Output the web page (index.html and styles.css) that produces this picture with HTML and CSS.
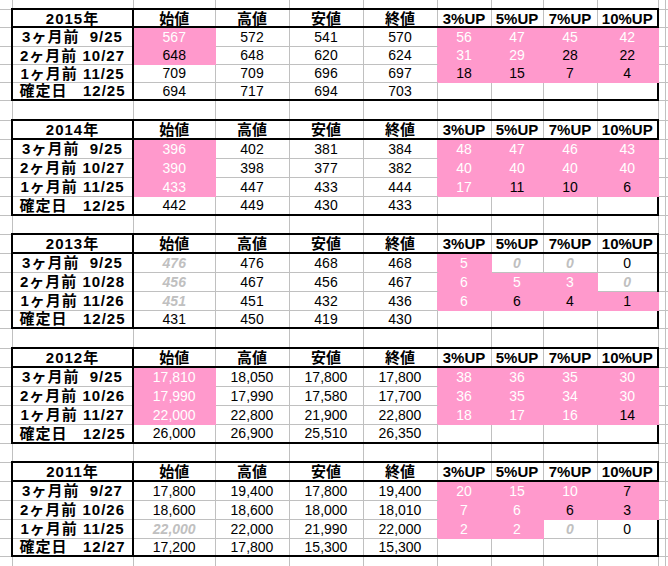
FILE: index.html
```html
<!DOCTYPE html>
<html lang="ja">
<head>
<meta charset="utf-8">
<title>株価 3ヶ月前比較</title>
<link rel="stylesheet" href="styles.css">
</head>
<body>
<table class="sheet">
<colgroup>
<col class="k0"><col class="k1"><col class="k2"><col class="k3"><col class="k3"><col class="k3"><col class="k6"><col class="k7"><col class="k6"><col class="k9"><col class="k10"><col class="k11">
</colgroup>
<tbody>
<tr class="h9 top"><td class="e"></td><td></td><td></td><td></td><td></td><td></td><td></td><td></td><td></td><td></td><td class="e"></td><td class="e"></td></tr>
</tbody>

<tbody class="blk">
<tr class="hd h18"><td class="e"></td><td class="lb">2015年</td><td>始値</td><td>高値</td><td>安値</td><td>終値</td><td>3%UP</td><td>5%UP</td><td>7%UP</td><td class="u4">10%UP</td><td class="e"></td><td class="e"></td></tr>
<tr class="h19"><td class="e"></td><td class="lb">3ヶ月前&nbsp;&nbsp;9/25</td><td class="p w">567</td><td>572</td><td>541</td><td class="pr">570</td><td class="p w">56</td><td class="p w">47</td><td class="p w">45</td><td class="p w u4">42</td><td class="e"></td><td class="e"></td></tr>
<tr class="h18"><td class="e"></td><td class="lb">2ヶ月前 10/27</td><td class="p">648</td><td>648</td><td>620</td><td class="pr">624</td><td class="p w">31</td><td class="p w">29</td><td class="p">28</td><td class="p u4">22</td><td class="e"></td><td class="e"></td></tr>
<tr class="h18"><td class="e"></td><td class="lb">1ヶ月前 11/25</td><td>709</td><td>709</td><td>696</td><td class="pr">697</td><td class="p">18</td><td class="p">15</td><td class="p">7</td><td class="p u4">4</td><td class="e"></td><td class="e"></td></tr>
<tr class="h18"><td class="e"></td><td class="lb">確定日&nbsp;&nbsp;&nbsp;12/25</td><td>694</td><td>717</td><td>694</td><td>703</td><td></td><td></td><td></td><td class="u4"></td><td class="e"></td><td class="e"></td></tr>
</tbody>

<tbody>
<tr class="h20"><td class="e"></td><td></td><td></td><td></td><td></td><td></td><td></td><td></td><td></td><td></td><td class="e"></td><td class="e"></td></tr>
</tbody>

<tbody class="blk">
<tr class="hd h19"><td class="e"></td><td class="lb">2014年</td><td>始値</td><td>高値</td><td>安値</td><td>終値</td><td>3%UP</td><td>5%UP</td><td>7%UP</td><td class="u4">10%UP</td><td class="e"></td><td class="e"></td></tr>
<tr class="h19"><td class="e"></td><td class="lb">3ヶ月前&nbsp;&nbsp;9/25</td><td class="p w">396</td><td>402</td><td>381</td><td class="pr">384</td><td class="p w">48</td><td class="p w">47</td><td class="p w">46</td><td class="p w u4">43</td><td class="e"></td><td class="e"></td></tr>
<tr class="h19"><td class="e"></td><td class="lb">2ヶ月前 10/27</td><td class="p w">390</td><td>398</td><td>377</td><td class="pr">382</td><td class="p w">40</td><td class="p w">40</td><td class="p w">40</td><td class="p w u4">40</td><td class="e"></td><td class="e"></td></tr>
<tr class="h19"><td class="e"></td><td class="lb">1ヶ月前 11/25</td><td class="p w">433</td><td>447</td><td>433</td><td class="pr">444</td><td class="p w">17</td><td class="p">11</td><td class="p">10</td><td class="p u4">6</td><td class="e"></td><td class="e"></td></tr>
<tr class="h19"><td class="e"></td><td class="lb">確定日&nbsp;&nbsp;&nbsp;12/25</td><td>442</td><td>449</td><td>430</td><td>433</td><td></td><td></td><td></td><td class="u4"></td><td class="e"></td><td class="e"></td></tr>
</tbody>

<tbody>
<tr class="h19"><td class="e"></td><td></td><td></td><td></td><td></td><td></td><td></td><td></td><td></td><td></td><td class="e"></td><td class="e"></td></tr>
</tbody>

<tbody class="blk">
<tr class="hd h19"><td class="e"></td><td class="lb">2013年</td><td>始値</td><td>高値</td><td>安値</td><td>終値</td><td>3%UP</td><td>5%UP</td><td>7%UP</td><td class="u4">10%UP</td><td class="e"></td><td class="e"></td></tr>
<tr class="h19"><td class="e"></td><td class="lb">3ヶ月前&nbsp;&nbsp;9/25</td><td class="g">476</td><td>476</td><td>468</td><td class="pr">468</td><td class="p w">5</td><td class="g">0</td><td class="g">0</td><td class="u4">0</td><td class="e"></td><td class="e"></td></tr>
<tr class="h19"><td class="e"></td><td class="lb">2ヶ月前 10/28</td><td class="g">456</td><td>467</td><td>456</td><td class="pr">467</td><td class="p w">6</td><td class="p w">5</td><td class="p w">3</td><td class="g u4">0</td><td class="e"></td><td class="e"></td></tr>
<tr class="h19"><td class="e"></td><td class="lb">1ヶ月前 11/26</td><td class="g">451</td><td>451</td><td>432</td><td class="pr">436</td><td class="p w">6</td><td class="p">6</td><td class="p">4</td><td class="p u4">1</td><td class="e"></td><td class="e"></td></tr>
<tr class="h18"><td class="e"></td><td class="lb">確定日&nbsp;&nbsp;&nbsp;12/25</td><td>431</td><td>450</td><td>419</td><td>430</td><td></td><td></td><td></td><td class="u4"></td><td class="e"></td><td class="e"></td></tr>
</tbody>

<tbody>
<tr class="h20"><td class="e"></td><td></td><td></td><td></td><td></td><td></td><td></td><td></td><td></td><td></td><td class="e"></td><td class="e"></td></tr>
</tbody>

<tbody class="blk">
<tr class="hd h19"><td class="e"></td><td class="lb">2012年</td><td>始値</td><td>高値</td><td>安値</td><td>終値</td><td>3%UP</td><td>5%UP</td><td>7%UP</td><td class="u4">10%UP</td><td class="e"></td><td class="e"></td></tr>
<tr class="h19"><td class="e"></td><td class="lb">3ヶ月前&nbsp;&nbsp;9/25</td><td class="p w">17,810</td><td>18,050</td><td>17,800</td><td class="pr">17,800</td><td class="p w">38</td><td class="p w">36</td><td class="p w">35</td><td class="p w u4">30</td><td class="e"></td><td class="e"></td></tr>
<tr class="h19"><td class="e"></td><td class="lb">2ヶ月前 10/26</td><td class="p w">17,990</td><td>17,990</td><td>17,580</td><td class="pr">17,700</td><td class="p w">36</td><td class="p w">35</td><td class="p w">34</td><td class="p w u4">30</td><td class="e"></td><td class="e"></td></tr>
<tr class="h19"><td class="e"></td><td class="lb">1ヶ月前 11/27</td><td class="p w">22,000</td><td>22,800</td><td>21,900</td><td class="pr">22,800</td><td class="p w">18</td><td class="p w">17</td><td class="p w">16</td><td class="p u4">14</td><td class="e"></td><td class="e"></td></tr>
<tr class="h19"><td class="e"></td><td class="lb">確定日&nbsp;&nbsp;&nbsp;12/25</td><td>26,000</td><td>26,900</td><td>25,510</td><td>26,350</td><td></td><td></td><td></td><td class="u4"></td><td class="e"></td><td class="e"></td></tr>
</tbody>

<tbody>
<tr class="h19"><td class="e"></td><td></td><td></td><td></td><td></td><td></td><td></td><td></td><td></td><td></td><td class="e"></td><td class="e"></td></tr>
</tbody>

<tbody class="blk">
<tr class="hd h19"><td class="e"></td><td class="lb">2011年</td><td>始値</td><td>高値</td><td>安値</td><td>終値</td><td>3%UP</td><td>5%UP</td><td>7%UP</td><td class="u4">10%UP</td><td class="e"></td><td class="e"></td></tr>
<tr class="h19"><td class="e"></td><td class="lb">3ヶ月前&nbsp;&nbsp;9/27</td><td>17,800</td><td>19,400</td><td>17,800</td><td class="pr">19,400</td><td class="p w">20</td><td class="p w">15</td><td class="p w">10</td><td class="p u4">7</td><td class="e"></td><td class="e"></td></tr>
<tr class="h19"><td class="e"></td><td class="lb">2ヶ月前 10/26</td><td>18,600</td><td>18,600</td><td>18,000</td><td class="pr">18,010</td><td class="p w">7</td><td class="p w">6</td><td class="p">6</td><td class="p u4">3</td><td class="e"></td><td class="e"></td></tr>
<tr class="h19"><td class="e"></td><td class="lb">1ヶ月前 11/25</td><td class="g">22,000</td><td>22,000</td><td>21,990</td><td class="pr">22,000</td><td class="p w">2</td><td class="p w">2</td><td class="g">0</td><td class="u4">0</td><td class="e"></td><td class="e"></td></tr>
<tr class="h18"><td class="e"></td><td class="lb">確定日&nbsp;&nbsp;&nbsp;12/27</td><td>17,200</td><td>17,800</td><td>15,300</td><td>15,300</td><td></td><td></td><td></td><td class="u4"></td><td class="e"></td><td class="e"></td></tr>
</tbody>

<tbody>
<tr class="h10"><td class="e"></td><td></td><td></td><td></td><td></td><td></td><td></td><td></td><td></td><td></td><td class="e"></td><td class="e"></td></tr>
</tbody>
</table>
</body>
</html>
```

FILE: styles.css
```css
html, body {
  margin: 0;
  padding: 0;
  background: #ffffff;
  overflow: hidden;
}

body {
  font-family: "Liberation Sans", "Noto Sans CJK JP", sans-serif;
  color: #000000;
}

.sheet {
  border-collapse: collapse;
  table-layout: fixed;
  width: 675px;
  font-size: 14px;
}

.k0 { width: 12px; }
.k1 { width: 121px; }
.k2 { width: 82px; }
.k3 { width: 74px; }
.k6 { width: 54px; }
.k7 { width: 52px; }
.k9 { width: 61px; }
.k10 { width: 7px; }
.k11 { width: 10px; }

.sheet td {
  border: 1px solid #c0c0c0;
  padding: 0;
  text-align: center;
  vertical-align: middle;
  white-space: nowrap;
  overflow: hidden;
  line-height: 1;
}

.sheet tr td:first-child {
  border-left: none;
}

.top td {
  border-top: none;
}

.h9 { height: 9px; }
.h10 { height: 10px; }
.h18 { height: 18px; }
.h19 { height: 19px; }
.h20 { height: 20px; }

/* block frame */
.blk tr:first-child td:not(.e) {
  border-top: 2px solid #000000;
  border-bottom: 2px solid #000000;
}

.blk tr:last-child td:not(.e) {
  border-bottom: 2px solid #000000;
}

.blk td.lb {
  border-left: 2px solid #000000;
  border-right: 2px solid #000000;
  font-weight: bold;
  font-size: 15px;
  letter-spacing: 1px;
}

.blk td.u4 {
  border-right: 2px solid #000000;
}

.hd td {
  font-weight: bold;
  font-size: 15px;
}

/* cell styles */
.sheet td.p {
  background: #ff99cc;
  border-color: #ff99cc;
}

.sheet td.pr {
  border-right-color: #ff99cc;
}

.w {
  color: #ffffff;
}

.g {
  color: #c0c0c0;
  font-style: italic;
  font-weight: bold;
}
```
